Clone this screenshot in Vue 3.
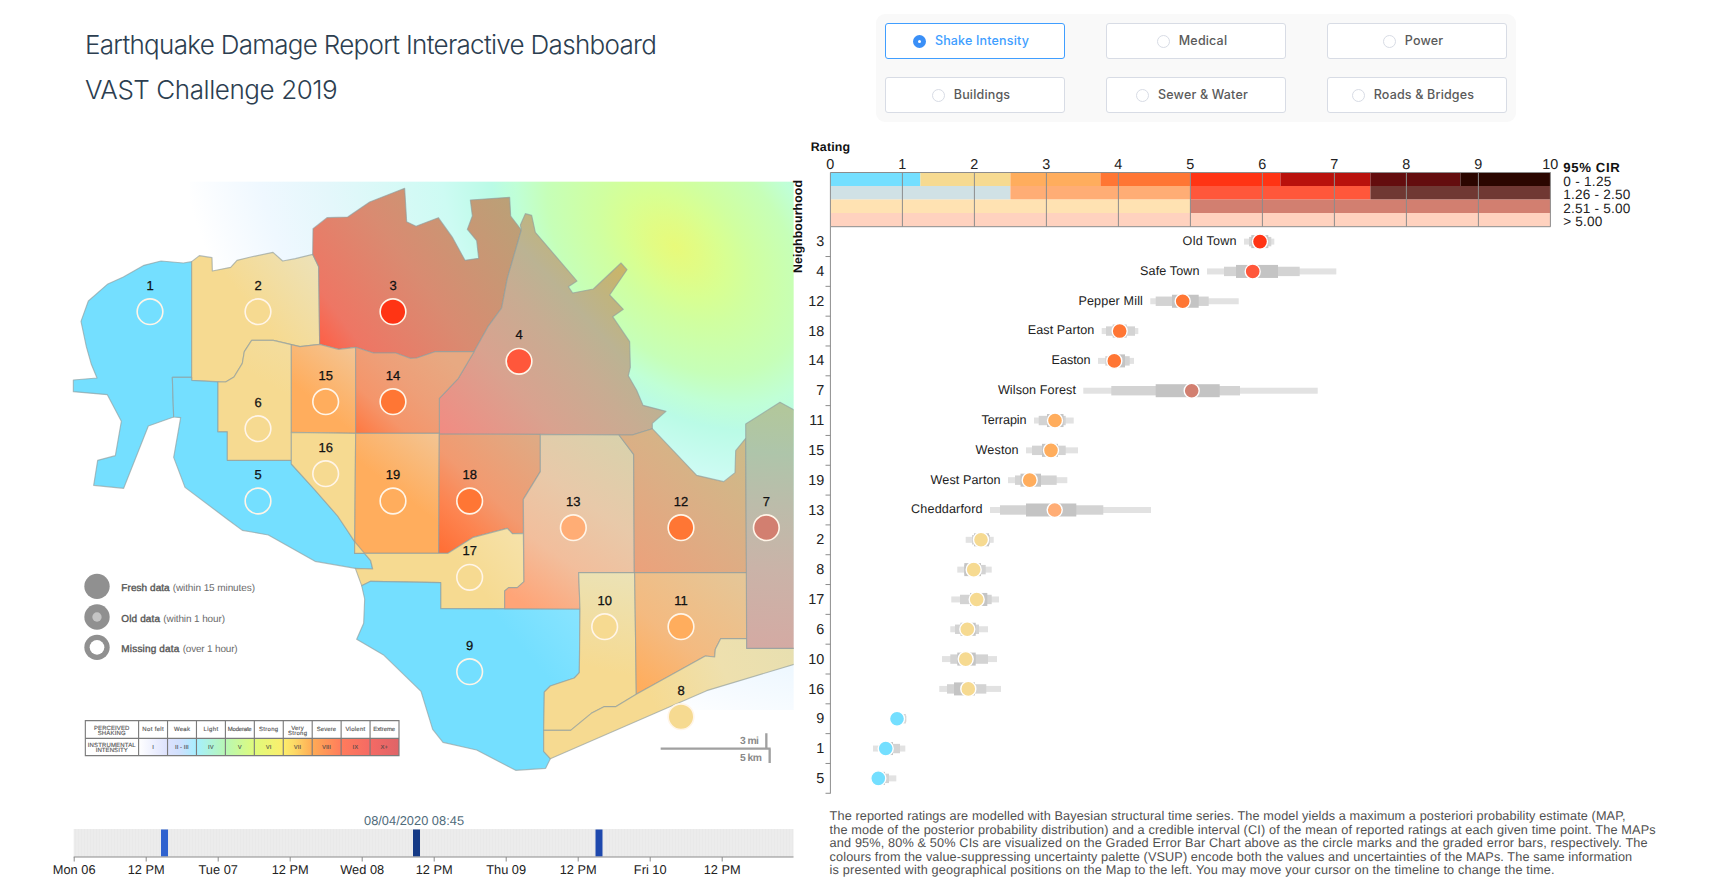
<script setup>
import { ref } from 'vue'

const options = ['Shake Intensity', 'Medical', 'Power', 'Buildings', 'Sewer & Water', 'Roads & Bridges']
const selected = ref('Shake Intensity')

const Y = '#f6da91'
const B = '#74dfff'
const O = '#ffad5d'

// id, outline, marker position, marker colour, gradient line, gradient stops
const regions = [
  { id: 1, c: [270, 425], m: B, stops: [[0, B]], line: [0, 0, 1, 1],
    p: '395,275 370,279 303,273 252,286 190,321 142,343 85,393 63,454 79,530 94,583 111,624 40,630 40,665 142,674 184,754 166,857 113,871 101,946 191,955 265,768 341,741 337,622 395,622' },
  { id: 2, c: [594, 425], m: Y, line: [500, 500, 790, 270], stops: [[0, Y], [0.3, Y], [1, '#ece2ba']],
    p: '395,275 418,257 456,263 457,303 512,292 531,271 572,261 639,247 668,273 706,266 758,253 776,290 779,523 720,530 640,511 575,511 553,545 547,580 522,621 497,636 395,631' },
  { id: 3, c: [999, 425], m: '#ff3414', line: [785, 520, 1349, 100], stops: [[0, '#fd6148'], [0.13, '#ee7664'], [0.5, '#d98b71'], [1, '#bba077']],
    p: '758,253 759,176 801,143 863,141 929,96 1034,55 1040,155 1068,169 1135,143 1178,203 1215,271 1256,265 1250,212 1222,178 1237,138 1231,90 1349,82 1352,138 1384,180 1342,325 1325,414 1284,470 1242,545 1125,545 1070,564 1050,565 1007,549 940,549 887,532 836,538 779,523 776,290' },
  { id: 4, c: [1377, 574], m: '#ff573b', line: [1140, 792, 1690, 290], stops: [[0, '#f28b82'], [0.35, '#d9a28f'], [0.6, '#c8ac92'], [0.75, '#bbb393'], [0.87, '#c0b47f'], [1, '#cbb566']],
    p: '1384,180 1381,165 1396,131 1415,136 1426,187 1551,333 1525,350 1538,369 1600,357 1683,279 1701,299 1649,375 1690,418 1658,440 1709,515 1711,592 1705,617 1730,661 1749,706 1818,724 1777,760 1777,776 1717,795 1138,792 1138,685 1195,625 1242,545 1284,470 1325,414 1342,325' },
  { id: 5, c: [594, 993], m: B, stops: [[0, B]], line: [0, 0, 1, 1],
    p: '337,622 395,622 395,631 474,636 474,785 502,785 502,871 694,871 694,882 765,960 833,1038 861,1080 884,1115 932,1172 938,1197 886,1195 765,1174 625,1095 547,1081 505,1050 375,952 341,862 362,743 341,741' },
  { id: 6, c: [594, 776], m: Y, line: [620, 640, 700, 510], stops: [[0, Y], [1, '#f3dd9f']],
    p: '497,636 522,621 547,580 553,545 575,511 640,511 694,524 694,871 502,871 502,785 474,785 474,636' },
  { id: 15, c: [797, 695], m: O, line: [710, 760, 890, 540], stops: [[0, O], [0.3, O], [1, '#f3c594']],
    p: '694,524 720,530 779,523 836,538 887,532 887,790 694,787' },
  { id: 14, c: [999, 695], m: '#ff7634', line: [887, 790, 1130, 530], stops: [[0, '#ff7840'], [0.3, '#f5956a'], [0.6, '#ee9f78'], [1, '#e7a982']],
    p: '887,532 940,549 1007,549 1050,565 1070,564 1125,545 1242,545 1195,625 1138,685 1138,790 887,790' },
  { id: 16, c: [797, 911], m: Y, line: [0, 0, 1, 1], stops: [[0, Y]],
    p: '694,787 887,790 884,1115 861,1080 833,1038 765,960 694,882' },
  { id: 19, c: [999, 993], m: O, line: [900, 1100, 1138, 790], stops: [[0, O], [0.45, O], [1, '#f3c594']],
    p: '887,790 1138,790 1136,1150 884,1150' },
  { id: 18, c: [1229, 993], m: '#ff7634', line: [1138, 1130, 1430, 810], stops: [[0, '#ff7037'], [0.25, '#fd8450'], [0.5, '#f29a70'], [1, '#dfaa84']],
    p: '1138,792 1441,793 1441,905 1390,988 1390,1090 1357,1091 1342,1075 1240,1102 1164,1150 1136,1150' },
  { id: 17, c: [1229, 1222], m: Y, line: [1230, 1222, 1390, 1090], stops: [[0, Y], [1, '#f6e2aa']],
    p: '884,1150 1164,1150 1240,1102 1342,1075 1357,1091 1390,1090 1392,1235 1372,1253 1346,1253 1334,1263 1334,1316 1142,1316 1142,1238 932,1234 905,1247 886,1195 938,1197 932,1172 884,1115' },
  { id: 9, c: [1229, 1505], m: B, line: [1400, 1450, 1560, 1317], stops: [[0, B], [1, '#88e4ff']],
    p: '905,1247 932,1234 1142,1238 1142,1316 1560,1317 1558,1508 1543,1524 1471,1548 1453,1566 1451,1744 1471,1766 1457,1795 1367,1801 1250,1740 1149,1717 1118,1678 1083,1564 972,1456 890,1408 911,1360 914,1287' },
  { id: 13, c: [1540, 1073], m: '#ffad75', line: [1400, 1310, 1740, 820], stops: [[0, '#ffa477'], [0.3, '#f2be9c'], [0.6, '#e8c9a9'], [1, '#d8d2ac']],
    p: '1441,793 1677,795 1721,853 1723,1208 1556,1208 1560,1317 1334,1316 1334,1263 1346,1253 1372,1253 1392,1235 1390,988 1441,905' },
  { id: 10, c: [1634, 1370], m: Y, line: [1630, 1500, 1700, 1208], stops: [[0, Y], [1, '#ebe2b6']],
    p: '1556,1208 1724,1208 1729,1573 1667,1610 1632,1610 1594,1630 1532,1681 1451,1681 1453,1566 1471,1548 1543,1524 1558,1508 1560,1317' },
  { id: 12, c: [1863, 1073], m: '#ff7634', line: [1724, 1208, 2057, 830], stops: [[0, '#eca17b'], [0.5, '#dcae85'], [1, '#cdbb89']],
    p: '1677,795 1717,795 1777,776 1910,916 1991,935 2025,908 2027,842 2057,805 2060,1208 1723,1208 1721,853' },
  { id: 11, c: [1863, 1370], m: O, line: [1729, 1540, 2000, 1190], stops: [[0, O], [0.4, '#f4ba80'], [1, '#e5c697']],
    p: '1724,1208 2060,1208 2060,1406 1982,1406 1966,1438 1964,1461 1936,1458 1729,1573' },
  { id: 8, c: [1863, 1640], m: Y, line: [1780, 1600, 2202, 1400], stops: [[0, Y], [0.5, '#eee0ae'], [1, '#e7dfb0']],
    p: '1451,1681 1532,1681 1594,1630 1632,1610 1667,1610 1729,1573 1936,1458 1964,1461 1966,1438 1982,1406 2060,1406 2060,1435 2206,1435 2206,1482 1940,1562 1471,1766 1451,1744' },
  { id: 7, c: [2119, 1073], m: '#d27f70', line: [2100, 1435, 2160, 720], stops: [[0, '#d4aaa3'], [0.33, '#cab3a8'], [0.6, '#bcbcaa'], [0.82, '#aec5aa'], [1, '#b2c79c']],
    p: '2057,762 2160,697 2206,722 2206,1435 2060,1435' },
]

const haze = [[0, '#e8fa7a'], [0.05, '#e1fc85'], [0.1, '#d8ff92'], [0.15, '#d0ffa0'], [0.25, '#c6ffb8'], [0.31, '#c0ffd6'], [0.36, '#bafbe6'], [0.46, '#cdfbf3'], [0.7, '#e4f7fb'], [0.84, '#eff8ff'], [0.94, '#f9fcff'], [1, '#ffffff']]

const freshness = [
  { y: 1249, name: 'Fresh data', w: 145, note: '(within 15 minutes)', x: 338, nw: 247 },
  { y: 1341, name: 'Old data', w: 116, note: '(within 1 hour)', x: 310, nw: 185 },
  { y: 1432, name: 'Missing data', w: 174, note: '(over 1 hour)', x: 368, nw: 165 },
]

const scale = [
  [['Not felt'], 'I', 64], [['Weak'], 'II - III', 48], [['Light'], 'IV', 44], [['Moderate'], 'V', 72], [['Strong'], 'VI', 57],
  [['Very', 'Strong'], 'VII', 57], [['Severe'], 'VIII', 58], [['Violent'], 'IX', 59], [['Extreme'], 'X+', 66],
]
const scaleStops = [[0, '#ffffff'], [0.11, '#dde2fd'], [0.16, '#cfe0fd'], [0.222, '#a6efff'], [0.333, '#b8f7b4'], [0.444, '#dffb7c'], [0.555, '#fcee6c'], [0.6, '#fdd866'], [0.667, '#ffab55'], [0.778, '#ff7c5c'], [0.889, '#f56a64'], [1, '#df6468']]

const days = ['Mon 06', '12 PM', 'Tue 07', '12 PM', 'Wed 08', '12 PM', 'Thu 09', '12 PM', 'Fri 10', '12 PM']
const marks = [[161, '#2f62cf'], [413, '#153a86'], [595.5, '#1e48ad']]

const bands = [
  ['#74dfff', '#f6da91', '#ffad5d', '#ff7634', '#ff3414', '#b9110c', '#640d0e', '#2b0600'],
  ['#d0e1e5', '#ffad75', '#ff573b', '#703833'],
  ['#ffe2b2', '#d27f70'],
  ['#ffd2bf'],
]
const ranges = [['0 - 1.25', 48], ['1.26 - 2.50', 67], ['2.51 - 5.00', 67], ['> 5.00', 39]]

// id, name, name width, 95 %, 80 %, 50 % intervals, estimate, colour
const rows = [
  [3, 'Old Town', 54, 1244, 1274.3, 1249, 1271.3, 1251.3, 1268.3, 1260, '#ff3414'],
  [4, 'Safe Town', 59.5, 1207, 1336.3, 1224, 1299.7, 1236, 1278, 1252.7, '#ff573b'],
  [12, 'Pepper Mill', 64.5, 1150.3, 1238.7, 1155.7, 1208.7, 1172, 1198.7, 1182.7, '#ff7634'],
  [18, 'East Parton', 66.5, 1101.7, 1138.3, 1106, 1135, 1112.7, 1126.7, 1119.7, '#ff7634'],
  [14, 'Easton', 39, 1098, 1134, 1105.3, 1129.7, 1110, 1125, 1114.3, '#ff7634'],
  [7, 'Wilson Forest', 78, 1083.3, 1317.7, 1111.3, 1240, 1155.7, 1219.7, 1191.7, '#d27f70'],
  [11, 'Terrapin', 45, 1034, 1073.7, 1038.7, 1065.7, 1047, 1063.5, 1055, '#ffad5d'],
  [15, 'Weston', 43, 1026, 1078, 1032, 1065.7, 1042, 1058, 1051, '#ffad5d'],
  [19, 'West Parton', 70, 1008, 1067.3, 1015, 1056.7, 1020.5, 1041, 1029.7, '#ffad5d'],
  [13, 'Cheddarford', 71.5, 990, 1151, 1000, 1103.3, 1026, 1076.3, 1054.7, '#ffad75'],
  [2, '', 0, 965.7, 993.7, 972, 990, 974, 989, 981, Y],
  [8, '', 0, 957.3, 991.7, 964.3, 985.7, 964.3, 981, 973.7, Y],
  [17, '', 0, 951.3, 999, 960, 991.7, 970, 987.3, 976.7, Y],
  [6, '', 0, 950.3, 988, 955, 979, 960.5, 975.7, 967.3, Y],
  [10, '', 0, 942, 997, 950.3, 988, 957.3, 975.7, 965.7, Y],
  [16, '', 0, 939.3, 1001, 947, 986.3, 954, 975, 968.3, Y],
  [9, '', 0, 892, 906.5, 893, 905.8, 894, 901, 897, B],
  [1, '', 0, 873, 905.3, 880, 900, 882, 893, 885.7, B],
  [5, '', 0, 873, 896.3, 874, 889, 875, 885, 878.3, B],
].map((r, i) => ({
  id: r[0], name: r[1], w: r[2], cy: 226.7 + 29.82 * (i + 0.5),
  bars: [[r[3], r[4], 6, '#e2e2e2'], [r[5], r[6], 9.4, '#d3d3d3'], [r[7], r[8], 13, '#c4c4c4']],
  x: r[9], fill: r[10],
}))

const caption = [
  ['The reported ratings are modelled with Bayesian structural time series. The model yields a maximum a posteriori probability estimate (MAP,', 796],
  ['the mode of the posterior probability distribution) and a credible interval (CI) of the mean of reported ratings at each given time point. The MAPs', 826],
  ['and 95%, 80% & 50% CIs are visualized on the Graded Error Bar Chart above as the circle marks and the graded error bars, respectively. The', 818],
  ['colours from the value-suppressing uncertainty palette (VSUP) encode both the values and uncertainties of the MAPs. The same information', 802.5],
  ['is presented with geographical positions on the Map to the left. You may move your cursor on the timeline to change the time.', 725],
]
</script>

<template>
  <div class="page">
    <header class="header">
      <div class="titles">
        <h1 class="t1">Earthquake Damage Report Interactive Dashboard</h1>
        <h1 class="t2">VAST Challenge 2019</h1>
      </div>
      <div class="options">
        <button v-for="o in options" :key="o" class="option" :class="{ on: o === selected }" @click="selected = o">
          <span class="dot"></span><span>{{ o }}</span>
        </button>
      </div>
    </header>

    <main class="main">
      <svg class="panel" width="794" height="756" viewBox="0 125 794 756">
        <defs>
          <radialGradient id="haze" gradientUnits="userSpaceOnUse" cx="0" cy="0" r="1200" gradientTransform="translate(1845 230) rotate(45) scale(1.5 1)">
            <stop v-for="s in haze" :key="s[0]" :offset="s[0]" :stop-color="s[1]" />
          </radialGradient>
          <linearGradient id="scale">
            <stop v-for="s in scaleStops" :key="s[0]" :offset="s[0]" :stop-color="s[1]" />
          </linearGradient>
          <linearGradient v-for="r in regions" :id="'g' + r.id" :key="r.id" gradientUnits="userSpaceOnUse" :x1="r.line[0]" :y1="r.line[1]" :x2="r.line[2]" :y2="r.line[3]">
            <stop v-for="s in r.stops" :key="s[0]" :offset="s[0]" :stop-color="s[1]" />
          </linearGradient>
          <pattern id="stripes" width="3" height="28" patternUnits="userSpaceOnUse">
            <rect width="3" height="28" fill="#ececec" />
            <rect width="1" height="28" fill="#e9e9e9" />
          </pattern>
          <clipPath id="frame"><rect x="0" y="0" width="2201" height="1860" /></clipPath>
        </defs>

        <g transform="translate(60 170) scale(0.333333)">
          <g clip-path="url(#frame)">
            <rect x="390" y="35" width="1812" height="1585" fill="url(#haze)" />
            <polygon v-for="r in regions" :key="r.id" :points="r.p" :fill="`url(#g${r.id})`" class="region" />
          </g>
          <g v-for="r in regions" :key="r.id">
            <circle :cx="r.c[0]" :cy="r.c[1]" r="38.5" :fill="r.m" class="marker" />
            <text :x="r.c[0]" :y="r.c[1] - 66" class="num">{{ r.id }}</text>
          </g>

          <g class="distance">
            <path d="M1802 1736H2132M2119 1690V1736M2129 1736V1779" />
            <text x="2040" y="1723" textLength="57">3 mi</text>
            <text x="2040" y="1773" textLength="66">5 km</text>
          </g>

          <g v-for="(f, i) in freshness" :key="f.name" class="fresh">
            <circle cx="111" :cy="f.y" r="38" fill="#909090" />
            <circle v-if="i === 1" cx="111" :cy="f.y" r="14" fill="#c4c4c4" />
            <circle v-if="i === 2" cx="111" :cy="f.y" r="22" fill="#fff" />
            <text x="184" :y="f.y + 14" :textLength="f.w" class="strong">{{ f.name }}</text>
            <text :x="f.x" :y="f.y + 14" :textLength="f.nw">{{ f.note }}</text>
          </g>

          <g class="scale">
            <rect x="236" y="1705" width="781" height="52" fill="url(#scale)" />
            <path d="M76 1652H1017V1757H76ZM76 1705H1017" />
            <path v-for="i in 9" :key="i" :d="`M${149 + i * 86.8} 1652V1757`" />
            <text x="155" y="1679" textLength="106">PERCEIVED</text>
            <text x="155" y="1695" textLength="84">SHAKING</text>
            <text x="155" y="1731" textLength="144">INSTRUMENTAL</text>
            <text x="155" y="1747" textLength="96">INTENSITY</text>
            <g v-for="(s, i) in scale" :key="i">
              <text v-for="(t, j) in s[0]" :key="t" :x="279 + i * 86.7" :y="s[0].length > 1 ? 1679 + j * 16 : 1684" :textLength="t === 'Very' ? 38 : s[2]">{{ t }}</text>
              <text :x="279 + i * 86.7" y="1736" class="roman">{{ s[1] }}</text>
            </g>
          </g>
        </g>

        <g class="timeline">
          <text x="414" y="825" textLength="100" class="stamp">08/04/2020 08:45</text>
          <rect x="73.7" y="829" width="719.8" height="28" fill="url(#stripes)" />
          <rect v-for="m in marks" :key="m[0]" :x="m[0]" y="829.5" width="7" height="27" :fill="m[1]" />
          <path d="M73.7 857H793.5" class="axis" />
          <g v-for="(d, i) in days" :key="i">
            <path :d="`M${74.2 + i * 72} 857v4.5`" class="axis" />
            <text :x="74.2 + i * 72" y="873.7">{{ d }}</text>
          </g>
        </g>
      </svg>

      <svg class="panel" width="931" height="756" viewBox="794 125 931 756">
        <text x="810.7" y="150.7" textLength="39.5" class="bold">Rating</text>
        <text transform="translate(801.8 273) rotate(-90)" textLength="93" class="bold">Neighbourhood</text>

        <g v-for="(b, i) in bands" :key="i">
          <rect v-for="(c, j) in b" :key="j" :x="830.4 + j * 720 / b.length" :y="172.5 + i * 13.5" :width="720 / b.length" height="13.6" :fill="c" />
        </g>
        <path v-for="i in 11" :key="i" :d="`M${758.4 + i * 72} 172.5V226.7`" class="grid" />
        <path d="M830.4 172.5H1550.5M830.4 226.7H1550.5M830.4 226.7V793.5" class="grid" />
        <text v-for="i in 11" :key="'t' + i" :x="758.2 + i * 72" y="168.6" class="tick">{{ i - 1 }}</text>

        <text x="1563.3" y="172.3" textLength="56.5" class="bold cir">95% CIR</text>
        <text v-for="(r, i) in ranges" :key="r[0]" x="1563.3" :y="185.6 + i * 13.5" :textLength="r[1]" class="range">{{ r[0] }}</text>

        <g v-for="(r, i) in rows" :key="r.id">
          <path :d="`M825.5 ${226.7 + 29.82 * (i + 1)}h5`" class="grid" />
          <text x="824.2" :y="r.cy + 4.6" class="row">{{ r.id }}</text>
          <rect v-for="(b, j) in r.bars" :key="j" :x="b[0]" :width="b[1] - b[0]" :y="r.cy - b[2] / 2" :height="b[2]" :fill="b[3]" />
          <circle :cx="r.x" :cy="r.cy" r="7.5" :fill="r.fill" stroke="#fff" stroke-width="1.4" />
          <text v-if="r.name" :x="r.bars[0][0] - 7.4" :y="r.cy + 3.4" :textLength="r.w" class="name">{{ r.name }}</text>
        </g>

        <text v-for="(l, i) in caption" :key="i" x="829.6" :y="820 + i * 13.5" :textLength="l[1]" class="caption">{{ l[0] }}</text>
      </svg>
    </main>
  </div>
</template>

<style>
body {
  background: #fff;
  overflow: hidden;
}
</style>

<style scoped>
.page {
  width: 1725px;
  height: 881px;
  overflow: hidden;
  font-family: "Liberation Sans", Arial, sans-serif;
}
.header {
  display: flex;
  justify-content: space-between;
  height: 125px;
  padding: 14px 209px 0 85px;
  box-sizing: border-box;
}
.titles {
  padding-top: 8px;
}
h1 {
  margin: 0;
  font: 300 26px/45px Inter, sans-serif;
  color: #2c3e50;
  white-space: nowrap;
}
.t1 { letter-spacing: -0.7px; }
.t2 { letter-spacing: -0.43px; }
.options {
  display: grid;
  grid-template-columns: repeat(3, 180px);
  grid-template-rows: 36px 36px;
  gap: 18px 41px;
  width: 640px;
  height: 108px;
  padding: 9px;
  box-sizing: border-box;
  background: #f9f9f9;
  border-radius: 9px;
}
.option {
  display: flex;
  align-items: center;
  justify-content: center;
  gap: 9px;
  padding: 0 8px 0 0;
  border: 1px solid #d8dce5;
  border-radius: 3px;
  background: #fff;
  color: #5a5a5a;
  font: 500 12.5px/1 Inter, sans-serif;
  letter-spacing: 0.17px;
  white-space: nowrap;
}
.dot {
  width: 13px;
  height: 13px;
  box-sizing: border-box;
  border: 1px solid #d8dce5;
  border-radius: 50%;
}
.option.on {
  border-color: #409eff;
  color: #409eff;
}
.on .dot {
  border: 5px solid #3a8ff7;
}
.main {
  display: flex;
}
.panel {
  display: block;
  overflow: visible;
  text-rendering: geometricPrecision;
}
.region {
  stroke: #8f9c9c;
  stroke-opacity: 0.65;
  stroke-width: 3.4;
  stroke-linejoin: round;
}
.marker {
  stroke: #fff5e8;
  stroke-width: 4.8;
}
.num {
  font-size: 39px;
  text-anchor: middle;
  fill: #111;
  stroke: #111;
  stroke-width: 0.8;
}
.distance path {
  fill: none;
  stroke: #a0a0a0;
  stroke-width: 7;
}
.distance text {
  font-size: 31px;
  font-weight: bold;
  fill: #8a8a8a;
}
.fresh text {
  font-size: 30px;
  fill: #6a6a6a;
}
.fresh .strong {
  fill: #555;
  stroke: #555;
  stroke-width: 1.1;
}
.scale path {
  fill: none;
  stroke: #7b7b7b;
  stroke-width: 3.4;
}
.scale text {
  font-size: 18px;
  text-anchor: middle;
  fill: #555;
  stroke: #555;
  stroke-width: 0.4;
}
.scale .roman {
  font-weight: bold;
  fill: #444;
  fill-opacity: 0.75;
  stroke: none;
}
.timeline text {
  font-size: 12.8px;
  text-anchor: middle;
  fill: #222;
}
.timeline .stamp {
  fill: #4f6b7a;
}
.axis, .grid {
  fill: none;
  stroke: #8c8c8c;
  stroke-width: 1;
}
.bold {
  font-size: 12.4px;
  font-weight: bold;
  fill: #111;
}
.cir {
  font-size: 13.2px;
}
.tick {
  font-size: 14.4px;
  text-anchor: middle;
  fill: #222;
}
.range {
  font-size: 13.6px;
  fill: #222;
}
.row {
  font-size: 14.4px;
  text-anchor: end;
  fill: #222;
}
.name {
  font-size: 12.6px;
  text-anchor: end;
  fill: #222;
}
.caption {
  font-size: 12.7px;
  fill: #505050;
}
</style>
